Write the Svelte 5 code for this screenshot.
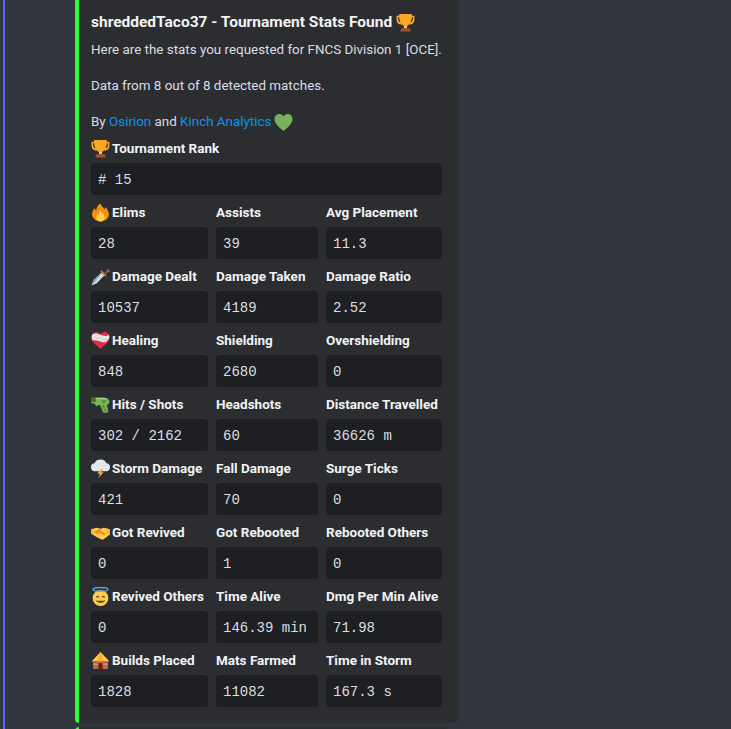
<script>
  const rows = [
    [{ e: 'fire', n: 'Elims', v: '28' }, { n: 'Assists', v: '39' }, { n: 'Avg Placement', v: '11.3' }],
    [{ e: 'dagger', n: 'Damage Dealt', v: '10537' }, { n: 'Damage Taken', v: '4189' }, { n: 'Damage Ratio', v: '2.52' }],
    [{ e: 'heart', n: 'Healing', v: '848' }, { n: 'Shielding', v: '2680' }, { n: 'Overshielding', v: '0' }],
    [{ e: 'gun', n: 'Hits / Shots', v: '302 / 2162' }, { n: 'Headshots', v: '60' }, { n: 'Distance Travelled', v: '36626 m' }],
    [{ e: 'storm', n: 'Storm Damage', v: '421' }, { n: 'Fall Damage', v: '70' }, { n: 'Surge Ticks', v: '0' }],
    [{ e: 'shake', n: 'Got Revived', v: '0' }, { n: 'Got Rebooted', v: '1' }, { n: 'Rebooted Others', v: '0' }],
    [{ e: 'halo', n: 'Revived Others', v: '0' }, { n: 'Time Alive', v: '146.39 min' }, { n: 'Dmg Per Min Alive', v: '71.98' }],
    [{ e: 'hut', n: 'Builds Placed', v: '1828' }, { n: 'Mats Farmed', v: '11082' }, { n: 'Time in Storm', v: '167.3 s' }]
  ];
  const fields = rows.flat();
</script>

{#snippet emoji(name)}
  <svg class="emoji" viewBox="0 0 36 36" aria-hidden="true">
    {#if name === 'trophy'}
      <path d="M6 2h24v3h5v7c0 7-4 10-9 10h-2c-1 2-3 3-4 3v4h-4v-4c-1 0-3-1-4-3h-2c-5 0-9-3-9-10V5h5z" fill="#f9a825"/>
      <path d="M6 8H4v4c0 3 2 5 5 6-2-3-3-6-3-10zm24 0h2v4c0 3-2 5-5 6 2-3 3-6 3-10z" fill="#2b2d31"/>
      <rect x="15" y="25" width="6" height="4" fill="#ffcc4d"/>
      <path d="M10 29h16l2 6H8z" fill="#a0522d"/>
    {:else if name === 'heartg'}
      <path d="M18 34C8 26 1 20 1 11 1 5 5 2 10 2c4 0 6.500 2 8 5 1.500-3 4-5 8-5 5 0 9 3 9 9 0 9-7 15-17 23z" fill="#78b159"/>
    {:else if name === 'fire'}
      <path d="M18 1c2 6 5 7 8 11 1-2 1-3 1-5 5 5 7 10 7 14 0 8-7 14-16 14S2 29 2 21c0-5 3-9 5-12 0 3 1 4 3 5 0-6 3-10 8-13z" fill="#f4900c"/>
      <path d="M18 14c1 4 8 7 8 13 0 5-4 8-8 8s-8-3-8-8c0-3 1-5 3-7 0 2 1 3 2 3 0-4 1-7 3-9z" fill="#ffcc4d"/>
    {:else if name === 'dagger'}
      <path d="M1 35l4-11 16-14 5 5-15 16z" fill="#ccd6dd"/>
      <path d="M1 35l4-11 18-16z" fill="#8899a6"/>
      <path d="M20 6l10 10-2.500 2.500-10-10z" fill="#c1694f"/>
      <path d="M26 11l4-5a3 3 0 1 1 2 4l-4 3z" fill="#a0522d"/>
    {:else if name === 'heart'}
      <path d="M18 34C8 26 1 20 1 12 1 6 5 2 10 2c4 0 6.500 2 8 5 1.500-3 4-5 8-5 5 0 9 4 9 10 0 8-7 14-17 22z" fill="#dd2e44"/>
      <path d="M2 7c4-3 8-3 16 0s11 3 16 0l1 5c-1 4-4 7-6 9-5 1-9 0-14-2-4-1-9-2-12-1-2-3-2-7-1-11z" fill="#e8e4df"/>
      <path d="M3 12c6-1 10 1 15 3s10 2 15 0" stroke="#c9bdb5" fill="none"/>
    {:else if name === 'gun'}
      <path d="M1 5h22c7 0 12 3 12 8 0 3-2 5-5 6l3 12-3 3-7-1-6-14h-3l-3 3-3-3-1-3H1z" fill="#77b255"/>
      <path d="M1 5h8v8H1z" fill="#3e721d"/>
      <path d="M9 5h14c4 0 8 1 10 3H9z" fill="#a6d388"/>
      <circle cx="24" cy="12" r="3.500" fill="#5c913b"/>
      <path d="M20 19h5l5 13-3 1z" fill="#5c913b"/>
    {:else if name === 'storm'}
      <path d="M8 23a7.500 7.500 0 0 1-1-15C8 4 12 1 18 1s10 3 11 7a7.500 7.500 0 0 1-1 15z" fill="#e1e8ed"/>
      <path d="M19 19l-7 9h5l-3 8 10-11h-5l4-6z" fill="#ffac33"/>
    {:else if name === 'shake'}
      <path d="M0 12l11-3 7 2 7-2 11 3v10L24 31c-2 1-4 1-5 0L8 25 0 20z" fill="#ffcc4d"/>
      <path d="M8 14l8-2 12 9-3 3-8-5-3 2c-3 1-6-1-6-3z" fill="#f19020"/>
      <path d="M0 12h5l2 9-7-1zm36 0h-5l-2 10 7-2z" fill="#ffac33"/>
    {:else if name === 'halo'}
      <circle cx="18" cy="21" r="15" fill="#ffcc4d"/>
      <ellipse cx="18" cy="4.500" rx="14" ry="3.500" fill="none" stroke="#5dadec" stroke-width="2.500"/>
      <path d="M10 20c1-3 4-3 5 0M21 20c1-3 4-3 5 0" fill="none" stroke="#664500" stroke-width="2"/>
      <path d="M9 25c3 7 15 7 18 0-5 1.500-13 1.500-18 0z" fill="#664500"/>
    {:else if name === 'hut'}
      <path d="M18 2l17 18H1z" fill="#ffcc4d"/>
      <path d="M18 2l7 18H11z" fill="#ffac33"/>
      <rect x="4" y="20" width="28" height="14" fill="#c1694f"/>
      <rect x="4" y="24" width="28" height="2" fill="#d99e82"/>
      <rect x="14" y="23" width="8" height="11" fill="#662113"/>
    {/if}
  </svg>
{/snippet}

<div class="view">
  <div class="rail"></div>
  <div class="messages">
    <article class="embed">
      <h2 class="title"><span>shreddedTaco37 - Tournament Stats Found</span>{@render emoji('trophy')}</h2>
      <div class="desc">
        <p>Here are the stats you requested for FNCS Division 1 [OCE].</p>
        <p>Data from 8 out of 8 detected matches.</p>
        <p class="credit"><span>By <span class="link">Osirion</span> and <span class="link">Kinch Analytics</span></span>{@render emoji('heartg')}</p>
      </div>
      <div class="fields">
        <div class="field wide">
          <div class="name">{@render emoji('trophy')}<span>Tournament Rank</span></div>
          <pre class="value"># 15</pre>
        </div>
        {#each fields as f}
          <div class="field">
            <div class="name">{#if f.e}{@render emoji(f.e)}{/if}<span>{f.n}</span></div>
            <pre class="value">{f.v}</pre>
          </div>
        {/each}
      </div>
    </article>
    <div class="next"></div>
  </div>
</div>

<style>
  :global(body) {
    margin: 0;
    background: #33353e;
  }
  .view {
    display: flex;
    width: 731px;
    height: 729px;
    overflow: hidden;
    font-family: Roboto, "Liberation Sans", sans-serif;
    color: #dbdee1;
  }
  .rail {
    flex: none;
    width: 2px;
    margin-left: 3px;
    background: #5865f2;
  }
  .messages {
    display: flex;
    flex-direction: column;
    gap: 4px;
    margin-left: 70px;
    margin-top: -5px;
  }
  .embed {
    flex: none;
    box-sizing: border-box;
    width: 383px;
    padding: 16px 16px 16px 12px;
    background: #2b2d31;
    border-left: 4px solid #2bfd3e;
    border-radius: 4px;
    display: flex;
    flex-direction: column;
    gap: 8px;
  }
  .next {
    flex: none;
    width: 373px;
    height: 60px;
    box-sizing: border-box;
    background: #2b2d31;
    border-left: 4px solid #2bfd3e;
    border-radius: 4px;
  }
  .title {
    display: flex;
    align-items: center;
    gap: 4px;
    margin: 0;
    height: 22px;
    font-size: 15.500px;
    line-height: 22px;
    font-weight: 700;
    color: #f2f3f5;
    white-space: nowrap;
  }
  .desc {
    font-size: 13.400px;
    line-height: 18px;
  }
  .desc p {
    margin: 0 0 18px;
    height: 18px;
    white-space: nowrap;
  }
  .desc .credit {
    display: flex;
    align-items: center;
    gap: 3px;
    margin: 0;
  }
  .link {
    color: #0b93f0;
  }
  .emoji {
    flex: none;
    width: 19px;
    height: 19px;
  }
  .fields {
    display: grid;
    grid-template-columns: 117px 102px 116px;
    gap: 8px;
  }
  .wide {
    grid-column: 1 / -1;
  }
  .name {
    display: flex;
    align-items: center;
    gap: 2px;
    height: 18px;
    font-size: 13.500px;
    line-height: 18px;
    font-weight: 700;
    color: #f2f3f5;
    white-space: nowrap;
    margin-bottom: 6px;
  }
  .value {
    margin: 0;
    box-sizing: border-box;
    height: 32px;
    padding: 8px 7px 6px;
    background: #1e1f22;
    border-radius: 4px;
    font-family: "Liberation Mono", monospace;
    font-size: 14px;
    line-height: 18px;
    color: #dbdee1;
  }
</style>
